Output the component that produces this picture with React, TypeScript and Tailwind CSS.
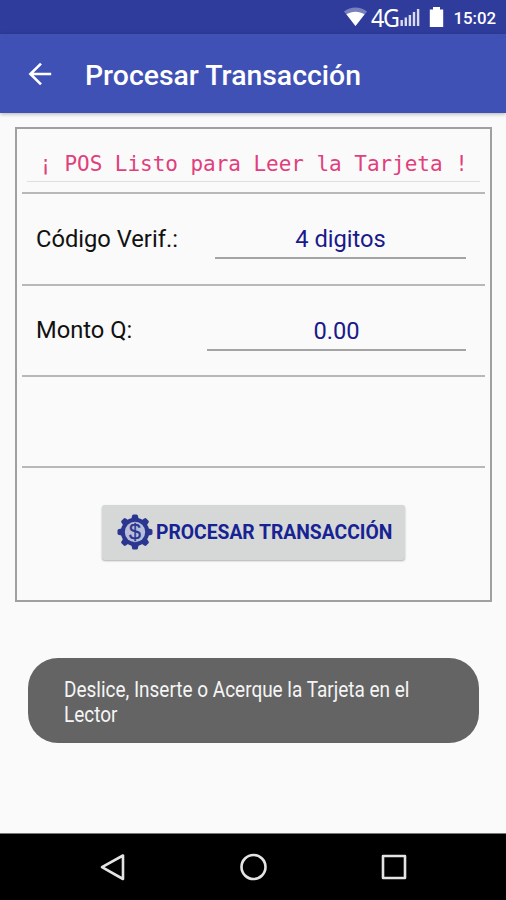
import type { ReactNode } from "react";

function StatusBar() {
  return (
    <div className="flex h-[34px] items-center justify-end bg-[#303c9c] pr-[10px] text-white">
      <svg width="26" height="20" viewBox="0 0 26 20" className="mr-[2px]">
        <path d="M1 4.5C8 -0.8 17 -0.8 24 4.5L12.5 19Z" fill="#fff" opacity="0.35" />
        <path d="M3.4 7.2C9 3.8 16 3.8 21.6 7.2L12.5 19Z" fill="#fff" />
      </svg>
      <span className="w-[28px] origin-left scale-x-[0.93] font-['Noto_Sans',sans-serif] text-[25px] leading-[34px] tracking-[-1.5px]">4G</span>
      <svg width="22" height="20" viewBox="0 0 22 20" className="mr-[8px]" fill="#d9dcf0">
        <rect x="1.5" y="13" width="2.4" height="6" />
        <rect x="5.6" y="10.5" width="2.4" height="8.5" />
        <rect x="9.7" y="8" width="2.4" height="11" />
        <rect x="13.8" y="5" width="2.4" height="14" />
        <rect x="17.9" y="2" width="2.4" height="17" />
      </svg>
      <svg width="15" height="22" viewBox="0 0 15 22" className="mr-[9px]">
        <path d="M4 1h7v2.5h3.2V21H0.8V3.5H4Z" fill="#fff" />
      </svg>
      <span className="pt-[2px] text-[16.8px] font-medium leading-[34px]">15:02</span>
    </div>
  );
}

function AppBar() {
  return (
    <div className="flex h-[79px] items-center bg-[#3f51b5] pl-[28px] text-white shadow-[0_1px_4px_rgba(0,0,0,0.3)]">
      <svg width="24" height="24" viewBox="0 0 24 24" fill="none" stroke="#fff" strokeWidth="2.6">
        <path d="M23.2 12H3M13 1.6L2.4 12L13 22.4" />
      </svg>
      <h1 className="ml-[33px] pt-[5px] text-[28.4px] font-medium leading-[34px]">Procesar Transacción</h1>
    </div>
  );
}

function Field({ label, value, width }: { label: string; value: string; width: string }) {
  return (
    <div className="flex h-[91.5px] items-center justify-between border-b-2 border-[#b8b8b8] pl-[14px] pr-[19px]">
      <span className="pt-[2px] text-[23.7px] text-[#111]">{label}</span>
      <div className={`${width} h-[41px] border-b-2 border-[#a4a4a4] text-center text-[23.7px] leading-[43px] text-[#1a1a8c]`}>
        {value}
      </div>
    </div>
  );
}

function GearIcon() {
  const teeth = [0, 45, 90, 135, 180, 225, 270, 315];
  return (
    <svg width="36" height="36" viewBox="0 0 36 36" className="shrink-0">
      <g fill="#2a3690">
        {teeth.map((angle) => (
          <path key={angle} d="M14 7L15 2Q15.2 0.5 16.4 0.5H19.6Q20.8 0.5 21 2L22 7Z" transform={`rotate(${angle} 18 18)`} />
        ))}
        <circle cx="18" cy="18" r="14.2" />
      </g>
      <circle cx="18" cy="18" r="10.2" fill="#b9bfd8" />
      <text x="18" y="25.4" textAnchor="middle" fontSize="21.5" fill="#2a3690" stroke="#2a3690" strokeWidth="0.3" className="font-['Liberation_Sans',sans-serif]">$</text>
    </svg>
  );
}

function NavSlot({ children }: { children: ReactNode }) {
  return (
    <div className="flex w-[140.5px] justify-center">
      <svg width="30" height="30" viewBox="0 0 30 30" fill="none" stroke="#e4e4e4" strokeWidth="2.6" strokeLinejoin="round">
        {children}
      </svg>
    </div>
  );
}

export default function App() {
  return (
    <div className="flex h-[900px] w-[506px] flex-col overflow-hidden bg-[#fafafa] font-['Roboto',sans-serif]">
      <StatusBar />
      <AppBar />

      <main className="flex flex-1 flex-col">
        <section className="ml-[15px] mr-[14px] mt-[14px] h-[475px] border-2 border-[#a0a0a0] px-[5px]">
          <div className="h-[65px] border-b-2 border-[#b8b8b8] px-[5px]">
            <div className="h-[53px] whitespace-nowrap border-b border-[#dedede] text-center font-['DejaVu_Sans_Mono',monospace] text-[21px] leading-[70px] tracking-[-0.04px] text-[#e0407c]">
              ¡ POS Listo para Leer la Tarjeta !
            </div>
          </div>
          <Field label="Código Verif.:" value="4 digitos" width="w-[251px]" />
          <Field label="Monto Q:" value="0.00" width="w-[259px]" />
          <div className="h-[91px] border-b-2 border-[#b8b8b8]" />
          <div className="flex justify-center pt-[37px]">
            <button className="flex h-[55px] w-[303px] items-center rounded-[3px] bg-[#d6d7d7] pb-[2px] pl-[15px] shadow-[0_1px_2px_rgba(0,0,0,0.3)]">
              <GearIcon />
              <span className="ml-[3px] whitespace-nowrap pt-[3px] text-[19.3px] font-bold text-[#172393]">PROCESAR TRANSACCIÓN</span>
            </button>
          </div>
        </section>

        <div className="ml-[28px] mt-[56px] h-[85px] w-[451px] rounded-[30px] bg-[#646464] pl-[36px] pt-[19px]">
          <p className="w-[420px] origin-left scale-x-[0.862] text-[22px] leading-[25px] text-[#f5f5f5]">
            Deslice, Inserte o Acerque la Tarjeta en el
            <br />
            Lector
          </p>
        </div>
      </main>

      <nav className="flex h-[67px] items-center justify-center border-t border-[#777] bg-black">
        <NavSlot>
          <path d="M25 3.5V27L4 15.2Z" />
        </NavSlot>
        <NavSlot>
          <circle cx="15.5" cy="15" r="12" />
        </NavSlot>
        <NavSlot>
          <rect x="4" y="4" width="22" height="22" />
        </NavSlot>
      </nav>
    </div>
  );
}
